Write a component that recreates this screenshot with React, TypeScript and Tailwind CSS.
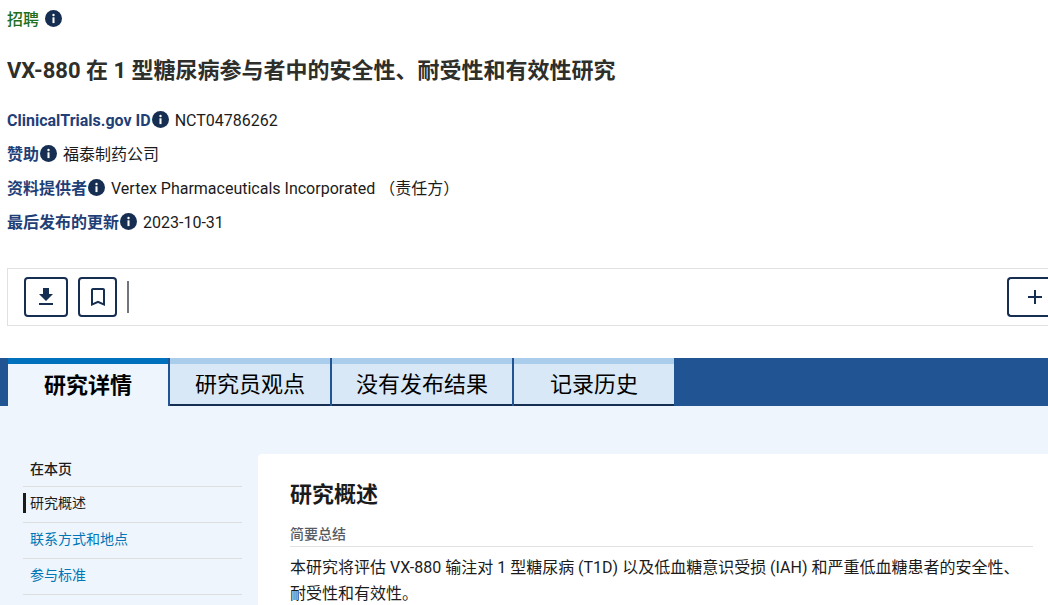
import { MdAdd, MdBookmarkBorder, MdFileDownload } from "react-icons/md";

const tabs = ["研究详情", "研究员观点", "没有发布结果", "记录历史"];

const sections = [
  { id: "overview", title: "研究概述" },
  { id: "contacts", title: "联系方式和地点" },
  { id: "criteria", title: "参与标准" },
];

const facts = [
  { label: "ClinicalTrials.gov ID", value: "NCT04786262" },
  { label: "赞助", value: "福泰制药公司" },
  { label: "资料提供者", value: "Vertex Pharmaceuticals Incorporated （责任方）" },
  { label: "最后发布的更新", value: "2023-10-31" },
];

// Small round "i" button that sits after a label
function InfoButton({ label }: { label: string }) {
  return (
    <button type="button" aria-label={label} className="mb-1 text-[#162e51]">
      <svg viewBox="0 0 20 20" className="size-[17px]" fill="currentColor">
        <circle cx="10" cy="10" r="10" />
        <circle cx="10" cy="5.9" r="1.4" fill="white" />
        <rect x="8.8" y="8.6" width="2.4" height="6.8" fill="white" />
      </svg>
    </button>
  );
}

function StudyHeader() {
  return (
    <header className="px-[7px] pt-2">
      <div className="flex h-6 items-center gap-1.5 font-medium text-[#216e1f]">
        招聘
        <InfoButton label="招聘" />
      </div>
      <h1 className="mt-[23px] text-[22px] leading-8 font-bold text-[#2e2e2a]">
        VX-880 在 1 型糖尿病参与者中的安全性、耐受性和有效性研究
      </h1>
      <dl className="mt-[17px]">
        {facts.map((fact) => (
          <div key={fact.label} className="flex h-[34px] items-center">
            <dt className="flex items-center gap-px font-bold text-[#1f4077]">
              {fact.label}
              <InfoButton label={fact.label} />
            </dt>
            <dd className="ml-1.5">{fact.value}</dd>
          </div>
        ))}
      </dl>
    </header>
  );
}

function Toolbar() {
  return (
    <div className="mt-7 ml-[7px] flex h-[58px] items-center border border-r-0 border-[#dfe1e2] pl-4 text-[#162e51]">
      <button
        type="button"
        aria-label="下载"
        className="flex h-10 w-11 items-center justify-center rounded border-2 border-[#162e51]"
      >
        <MdFileDownload className="size-6" />
      </button>
      <button
        type="button"
        aria-label="保存"
        className="ml-2.5 flex h-10 w-[39px] items-center justify-center rounded border-2 border-[#162e51]"
      >
        <MdBookmarkBorder className="size-6" />
      </button>
      <div className="ml-2.5 h-8 w-0.5 bg-[#71767a]" />
      <button
        type="button"
        aria-label="展开"
        className="ml-auto flex h-10 w-[41px] items-center rounded-l border-2 border-r-0 border-[#162e51] pl-3.5"
      >
        <MdAdd className="size-6" />
      </button>
    </div>
  );
}

function Tabs() {
  return (
    <div role="tablist" className="mt-8 flex h-12 gap-0.5 bg-[#205493] pl-2 text-[22px] text-black">
      {tabs.map((tab, i) => (
        <button
          key={tab}
          type="button"
          role="tab"
          aria-selected={i === 0}
          className={
            i === 0
              ? "min-w-[160px] border-t-6 border-[#0071bc] bg-[#eef5fc] px-6 font-bold"
              : "min-w-[160px] border-t-6 border-b-2 border-t-[#aacdec] border-b-[#162e51] bg-[#d9e8f6] px-6"
          }
        >
          {tab}
        </button>
      ))}
    </div>
  );
}

function SideNav() {
  return (
    <nav className="ml-[23px] w-[219px] shrink-0 text-sm">
      <h2 className="flex h-[33px] items-center border-b border-[#dcdee0] pb-0.5 pl-[7px] font-medium">
        在本页
      </h2>
      <ul>
        {sections.map((section, i) => (
          <li key={section.id} className="flex h-9 items-center border-b border-[#dcdee0] pb-1">
            <a
              href={`#${section.id}`}
              className={
                i === 0
                  ? "border-l-3 border-[#1b1b1b] pl-1 leading-5"
                  : "pl-[7px] leading-5 text-[#0076b6]"
              }
            >
              {section.title}
            </a>
          </li>
        ))}
      </ul>
    </nav>
  );
}

const App = () => {
  return (
    <div className="flex min-h-screen flex-col bg-white font-['Roboto','Noto_Sans_CJK_SC',sans-serif] text-base text-[#1b1b1b]">
      <StudyHeader />
      <Toolbar />
      <Tabs />

      <div className="flex flex-1 gap-4 bg-[#eef5fc] pt-12">
        <SideNav />
        <main id="overview" className="flex-1 rounded-tl bg-white pt-[25px] pr-[15px] pl-8">
          <h2 className="text-[22px] leading-8 font-bold">研究概述</h2>
          <h3 className="mt-3 border-b border-[#dfe1e2] text-sm leading-[23px] font-medium text-[#565c65]">
            简要总结
          </h3>
          <p className="mt-2 leading-[26px]">
            本研究将评估 VX-880 输注对 1 型糖尿病 (T1D) 以及低血糖意识受损 (IAH) 和严重低血糖患者的安全性、耐受性和有效性。
          </p>
        </main>
      </div>
    </div>
  );
};

export default App;
